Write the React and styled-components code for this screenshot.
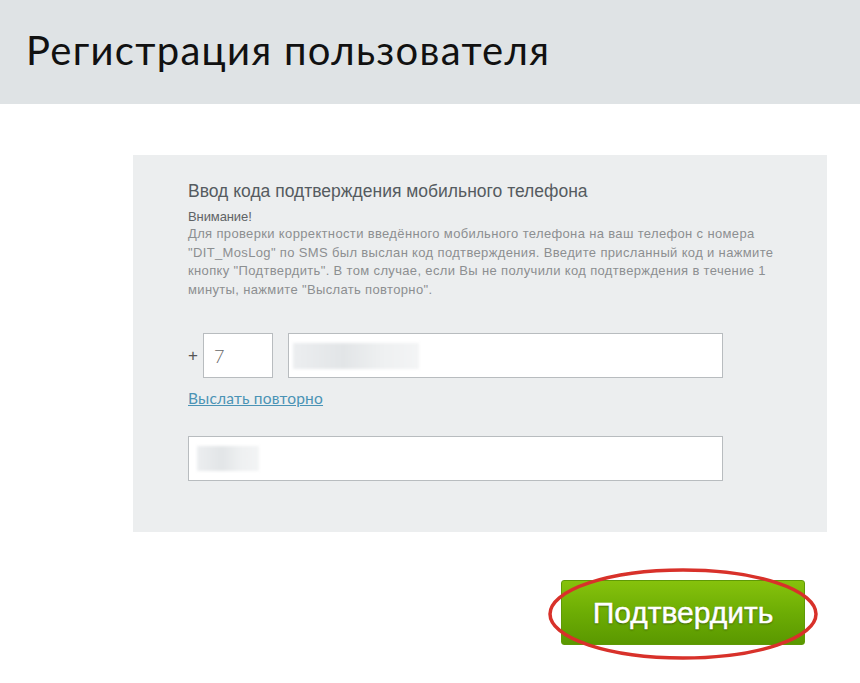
import React from 'react';
import styled, { createGlobalStyle } from 'styled-components';

const Global = createGlobalStyle`
  body {
    margin: 0;
    background: #fff;
    font-family: "Liberation Sans", Arial, sans-serif;
  }
`

const Header = styled.div`
  height: 104px;
  background: #dfe3e5;
  display: flex;
  align-items: center;
  padding-left: 26px;
  box-sizing: border-box;
`
const Title = styled.h1`
  margin: 0 0 4px 0;
  font-family: "Lato", sans-serif;
  font-weight: 400;
  font-size: 40px;
  letter-spacing: 1.3px;
  color: #111;
`
const Main = styled.div`
  padding: 51px 0 0 133px;
  width: 694px;
`
const Panel = styled.div`
  background: #eceeef;
  height: 377px;
  box-sizing: border-box;
  padding: 26px 30px 0 55px;
`
const Heading = styled.h2`
  margin: 0 0 7px 0;
  font-family: "Liberation Sans", Arial, sans-serif;
  font-weight: 400;
  font-size: 17.5px;
  color: #555b60;
`
const Warning = styled.div`
  font-size: 13px;
  color: #5f6366;
  letter-spacing: -0.1px;
  line-height: 16px;
`
const Text = styled.p`
  margin: 0;
  font-size: 13px;
  line-height: 18.6px;
  letter-spacing: 0.35px;
  color: #8c8f91;
  white-space: nowrap;
`
const PhoneRow = styled.div`
  display: flex;
  align-items: center;
  margin-top: 34px;
`
const Plus = styled.span`
  font-size: 17px;
  color: #555;
  width: 15px;
`
const Field = styled.div`
  box-sizing: border-box;
  height: 45px;
  width: ${p => p.w}px;
  margin-left: ${p => p.ml || 0}px;
  background: #fff;
  border: 1px solid #b8bcbf;
  display: flex;
  align-items: center;
  padding-left: ${p => p.pl || 10}px;
  font-family: "Lato", sans-serif;
  font-size: 18px;
  font-weight: 300;
  color: #666;
`
const Blur = styled.span`
  display: block;
  width: ${p => p.w}px;
  height: ${p => p.h}px;
  background: linear-gradient(90deg, #eceef0 0%, #e2e5e7 40%, #eef0f1 70%, #f3f4f5 100%);
  filter: blur(1.5px);
`
const Resend = styled.a`
  display: inline-block;
  margin-top: 11px;
  font-family: "Lato", sans-serif;
  font-size: 15.5px;
  color: #4a93b5;
  text-decoration: underline;
  letter-spacing: 0.2px;
`
const CodeField = styled(Field)`
  margin-top: 28px;
  padding-left: 8px;
`
const Footer = styled.div`
  display: flex;
  justify-content: flex-end;
  padding: 48px 22px 38px 0;
`
const ButtonWrap = styled.div`
  position: relative;
  width: 244px;
  height: 65px;
`
const Button = styled.button`
  display: block;
  width: 244px;
  height: 65px;
  padding: 0;
  border: 1px solid #5f9a06;
  border-radius: 3px;
  background: linear-gradient(#86c20c, #6dad04 50%, #5a9800);
  color: #fff;
  font-family: "Liberation Sans", Arial, sans-serif;
  font-size: 30px;
  -webkit-text-stroke: 0.5px #fff;
  text-shadow: 0 1px 2px rgba(0,0,0,0.5);
  cursor: pointer;
`
const Ring = styled.svg`
  position: absolute;
  display: block;
  left: -15px;
  top: -14px;
  pointer-events: none;
`

export default function App() {
  return (
    <>
      <Global />
      <Header>
        <Title>Регистрация пользователя</Title>
      </Header>
      <Main>
        <Panel>
          <Heading>Ввод кода подтверждения мобильного телефона</Heading>
          <Warning>Внимание!</Warning>
          <Text>
            Для проверки корректности введённого мобильного телефона на ваш телефон с номера<br />
            "DIT_MosLog" по SMS был выслан код подтверждения. Введите присланный код и нажмите<br />
            кнопку "Подтвердить". В том случае, если Вы не получили код подтверждения в течение 1<br />
            минуты, нажмите "Выслать повторно".
          </Text>
          <PhoneRow>
            <Plus>+</Plus>
            <Field w={70}>7</Field>
            <Field w={435} ml={15} pl={4}><Blur w={126} h={26} /></Field>
          </PhoneRow>
          <Resend>Выслать повторно</Resend>
          <CodeField w={535}><Blur w={62} h={25} /></CodeField>
        </Panel>
        <Footer>
          <ButtonWrap>
            <Button>Подтвердить</Button>
            <Ring width="274" height="96" viewBox="0 0 274 96">
              <ellipse cx="137" cy="48" rx="133" ry="44" fill="none" stroke="#d8312a" strokeWidth="3.5" />
            </Ring>
          </ButtonWrap>
        </Footer>
      </Main>
    </>
  );
}
